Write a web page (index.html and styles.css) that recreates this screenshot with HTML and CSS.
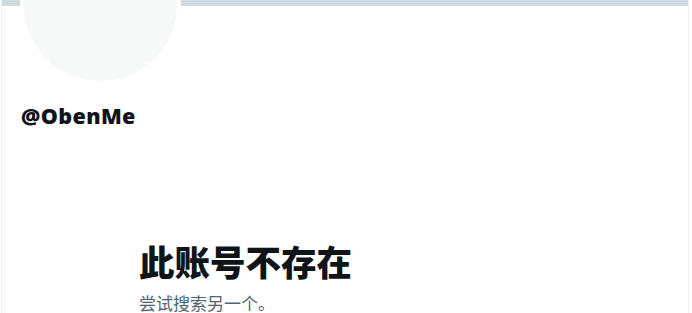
FILE: index.html
```html
<!DOCTYPE html>
<html lang="zh-CN">
<head>
<meta charset="utf-8">
<link rel="stylesheet" href="styles.css">
</head>
<body>
<main class="column">
  <header class="profile">
    <div class="banner"></div>
    <div class="avatar"></div>
    <div class="handle">@ObenMe</div>
  </header>
  <section class="empty">
    <div class="empty-inner">
      <h1 class="empty-title">此账号不存在</h1>
      <p class="empty-sub">尝试搜索另一个。</p>
    </div>
  </section>
</main>
</body>
</html>
```
FILE: styles.css
```css
html, body {
  margin: 0;
  padding: 0;
  background: #ffffff;
  height: 100%;
  overflow: hidden;
}
body {
  padding-left: 1px;
  font-family: "Open Sans", "Noto Sans CJK SC", sans-serif;
  color: #0f1419;
}
.column {
  width: 686px;
  border-left: 1px solid #eff3f4;
  border-right: 1px solid #eff3f4;
  min-height: 313px;
}
.profile {
  position: relative;
  padding: 0 0 0 19px;
}
.banner {
  height: 6px;
  margin-left: -19px;
  background: #cfd9de;
}
.avatar {
  position: absolute;
  left: 18px;
  top: -76px;
  width: 153px;
  height: 153px;
  border-radius: 50%;
  background: #f7f9f9;
  border: 4.5px solid #ffffff;
}
.handle {
  margin-top: 96px;
  font-size: 21.5px;
  font-weight: 800;
  line-height: 28px;
  letter-spacing: 0.4px;
}
.empty {
  display: flex;
  justify-content: center;
  margin-top: 111px;
}
.empty-inner {
  width: 412px;
}
.empty-title {
  margin: 0;
  font-family: "Noto Sans CJK SC", sans-serif;
  font-size: 35.5px;
  font-weight: 800;
  line-height: 40px;
}
.empty-sub {
  margin: 11px 0 0;
  font-family: "Noto Sans CJK SC", sans-serif;
  font-size: 17px;
  line-height: 22px;
  color: #536471;
}
```
